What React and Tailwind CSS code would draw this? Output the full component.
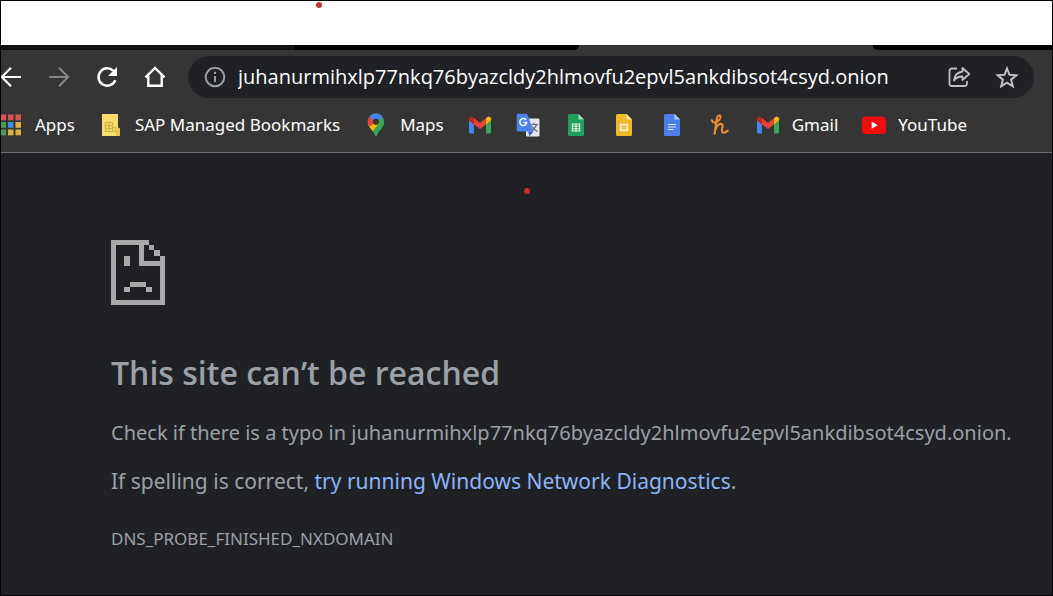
import React from "react";

const HOST = "juhanurmihxlp77nkq76byazcldy2hlmovfu2epvl5ankdibsot4csyd.onion";

function AppsIcon() {
  const colors = [
    "#d9534f", "#d9534f", "#d9534f",
    "#3f9d5b", "#3b8beb", "#e0b13a",
    "#3f9d5b", "#e0b13a", "#e0b13a",
  ];
  return (
    <svg className="size-6 shrink-0" viewBox="0 0 24 24">
      {colors.map((color, i) => (
        <rect
          key={i}
          x={1.5 + (i % 3) * 7.5}
          y={1.5 + Math.floor(i / 3) * 7.5}
          width="5.5"
          height="5.8"
          fill={color}
        />
      ))}
    </svg>
  );
}

function FolderIcon() {
  return (
    <svg className="size-6 shrink-0" viewBox="0 0 24 24">
      <path d="M3 1h16v14l2 1v7H3z" fill="#f7dc6f" />
      <path d="M18.5 14l2.5 1.5V23H17v-6z" fill="#e8c24a" />
      <path
        d="M6.5 9.5h7v9h-7zM6.5 12.5h7M6.5 15.5h7M10 9.5v9M13.5 14.5h3v4h-3"
        fill="none"
        stroke="#d9b23c"
        strokeWidth="1.2"
      />
    </svg>
  );
}

function MapsIcon() {
  return (
    <svg className="size-6 shrink-0" viewBox="0 0 24 24">
      <defs>
        <clipPath id="pin">
          <path d="M12 .5a8.2 8.2 0 0 0-8.2 8.2c0 3 1.3 5 3.2 7.3 2 2.4 3.3 4 4 6.6.3 1.2 1.7 1.2 2 0 .7-2.6 2-4.2 4-6.6 1.9-2.3 3.2-4.3 3.2-7.3A8.2 8.2 0 0 0 12 .5z" />
        </clipPath>
      </defs>
      <g clipPath="url(#pin)">
        <rect width="24" height="24" fill="#34a853" />
        <path d="M0 0h6l6 9-6 6-6-3z" fill="#ea4335" />
        <path d="M3 13.5l9-9.500 3 6.500-8 9.500-5-3z" fill="#fbbc04" />
        <path d="M0 0h6l6 8.700-6.500 5L0 13z" fill="#ea4335" />
        <path d="M5 3l2-3h10l2 3.500-7 7z" fill="#4285f4" />
      </g>
      <circle cx="12" cy="8.7" r="3.1" fill="#353535" />
    </svg>
  );
}

function GmailIcon() {
  return (
    <svg className="size-6 shrink-0" viewBox="0 0 24 24">
      <path d="M1 7.5l5 3.8v9.2H2.5A1.5 1.5 0 0 1 1 19z" fill="#4285f4" />
      <path d="M23 7.5l-5 3.8v9.2h3.5A1.5 1.5 0 0 0 23 19z" fill="#34a853" />
      <path d="M18 5.5v5.9l5-3.8V6.2c0-2.3-2.4-3.3-4-2z" fill="#fbbc04" />
      <path d="M6 11.4V5.2l6 4.6 6-4.6v6.2L12 16z" fill="#ea4335" />
      <path d="M1 6.2v1.4l5 3.8V5.2l-1-.8C3.2 3 1 4.2 1 6.2z" fill="#c5221f" />
    </svg>
  );
}

function TranslateIcon() {
  return (
    <svg className="size-6 shrink-0" viewBox="0 0 24 24">
      <rect x="10" y="5.5" width="13.5" height="18" rx="1.3" fill="#e3e6ea" />
      <path d="M12 18.5h5.5l-4 5z" fill="#3367d6" />
      <path
        d="M14.5 11.5H22M18 9.8v1.7M20.5 11.500c-.8 3-2.8 5-5.500 6.800M16.200 13.200c1 2.200 2.800 4 5 5.200"
        fill="none"
        stroke="#667078"
        strokeWidth="1.2"
      />
      <path d="M2 .7h9.2l6.300 17.800H2A1.3 1.3 0 0 1 .7 17.2V2A1.3 1.3 0 0 1 2 .7z" fill="#4a83ec" />
      <path
        d="M10 6.8a3.5 3.5 0 1 0 .8 2.700H7.5"
        fill="none"
        stroke="#fff"
        strokeWidth="1.4"
      />
    </svg>
  );
}

function FileIcon({ color, fold, children }) {
  return (
    <svg className="size-6 shrink-0" viewBox="0 0 24 24">
      <path
        d="M5.5 1h9L20 6.5v15a1.5 1.5 0 0 1-1.5 1.5h-13A1.5 1.5 0 0 1 4 21.5v-19A1.5 1.5 0 0 1 5.5 1z"
        fill={color}
      />
      <path d="M14.5 1L20 6.5h-5.5z" fill={fold} />
      {children}
    </svg>
  );
}

function SheetsIcon() {
  return (
    <FileIcon color="#1fa15d" fold="#a5dcbf">
      <path
        d="M8.3 11h7.4v7H8.3zM8.3 13.3h7.4M8.3 15.7h7.4M12 11v7"
        fill="none"
        stroke="#e6f4ea"
        strokeWidth="1.1"
      />
    </FileIcon>
  );
}

function SlidesIcon() {
  return (
    <FileIcon color="#efb928" fold="#fae3a0">
      <path d="M8.5 11.5h7v6h-7z" fill="#f3c94f" stroke="#fdf3d5" strokeWidth="1.5" />
    </FileIcon>
  );
}

function DocsIcon() {
  return (
    <FileIcon color="#4a80ee" fold="#b3cdfb">
      <path d="M8 11.5h8M8 14h8M8 16.5h5.5" stroke="#d7e3fc" strokeWidth="1.2" />
    </FileIcon>
  );
}

function HoneyIcon() {
  return (
    <svg className="size-6 shrink-0" viewBox="0 0 24 24">
      <path
        d="M3.8 7.2c.6 2.6 3.400 2.600 5.700 1 2.300-1.600 3.600-4 2.800-5.300-.9-1.300-2.900-.2-3.500 2.600L6.600 20.800M7.600 16.500c1-3.300 3.200-5.600 5.200-5.600 2.300 0 2 2.300 1.400 4.500-.8 3 0 4.600 2 4.300 1.400-.2 2.500-.9 3.400-2"
        fill="none"
        stroke="#e6892f"
        strokeWidth="2.2"
        strokeLinecap="round"
        strokeLinejoin="round"
      />
    </svg>
  );
}

function YouTubeIcon() {
  return (
    <svg className="size-6 shrink-0" viewBox="0 0 24 24">
      <rect x="0" y="3.5" width="24" height="17.5" rx="4" fill="#f40b0b" />
      <path d="M9.7 8.6v7.2l6-3.6z" fill="#fff" />
    </svg>
  );
}

function SadPageIcon() {
  return (
    <svg
      className="h-[65px] w-[54px]"
      viewBox="0 0 54 65"
      fill="#a7a9ab"
      shapeRendering="crispEdges"
    >
      <path d="M0 0h38v5H0zM0 0h5v65H0zM0 60h54v5H0zM49 16h5v49h-5z" />
      <path d="M28 0h5v26h-5zM28 21h26v5H28zM38 5h5v5h-5zM43 10h6v6h-6z" />
      <path d="M13 16h6v10h-6zM19 42h16v5H19zM13 47h6v5h-6zM35 47h6v5h-6z" />
    </svg>
  );
}

const bookmarks = [
  { title: "Apps", icon: AppsIcon, showTitle: true },
  { title: "SAP Managed Bookmarks", icon: FolderIcon, showTitle: true },
  { title: "Maps", icon: MapsIcon, showTitle: true },
  { title: "Inbox", icon: GmailIcon },
  { title: "Translate", icon: TranslateIcon },
  { title: "Sheets", icon: SheetsIcon },
  { title: "Slides", icon: SlidesIcon },
  { title: "Docs", icon: DocsIcon },
  { title: "Honey", icon: HoneyIcon },
  { title: "Gmail", icon: GmailIcon, showTitle: true },
  { title: "YouTube", icon: YouTubeIcon, showTitle: true },
];

function TabStrip() {
  return (
    <div className="flex h-[5px] bg-[#353535]">
      <div className="w-[28%] bg-[#111111]" />
      <div className="flex-1 rounded-br-[5px] bg-black" />
      <div className="w-[28%]" />
      <div className="w-[17%] rounded-bl-[5px] bg-black" />
    </div>
  );
}

function Toolbar() {
  return (
    <div className="flex items-center gap-[21px] pt-1.5 pr-[18px]">
      <div className="-ml-0.5 flex gap-6">
        <button type="button" aria-label="Back">
          <svg className="size-6" viewBox="0 0 24 24" fill="none" stroke="#fff" strokeWidth="2.2">
            <path d="M22 12H3M12 2.8L2.8 12l9.2 9.2" />
          </svg>
        </button>
        <button type="button" aria-label="Forward">
          <svg className="size-6" viewBox="0 0 24 24" fill="none" stroke="#868686" strokeWidth="2">
            <path d="M2 12h19M12 2.8l9.2 9.2-9.2 9.2" />
          </svg>
        </button>
        <button type="button" aria-label="Reload">
          <svg className="size-6" viewBox="0 0 24 24">
            <path d="M20.3 15.2A8.7 8.7 0 1 1 18.5 6" fill="none" stroke="#fff" strokeWidth="2.4" />
            <path d="M22 2v9h-9z" fill="#fff" />
          </svg>
        </button>
        <button type="button" aria-label="Home">
          <svg className="size-6" viewBox="0 0 24 24" fill="none" stroke="#fff" strokeWidth="2.4">
            <path d="M2.5 12.3L12 3l9.5 9.3M5.3 10.5v10.3h13.4V10.5" />
          </svg>
        </button>
      </div>
      <div className="flex h-[42px] min-w-0 flex-1 items-center rounded-full bg-[#202124] pr-[15px] pl-4">
        <svg className="size-[22px] shrink-0" viewBox="0 0 22 22" fill="none" stroke="#9aa0a6" strokeWidth="2">
          <circle cx="11" cy="11" r="9.3" />
          <path d="M11 10v6M11 5.8V8" />
        </svg>
        <input
          type="text"
          aria-label="Address"
          defaultValue={HOST}
          className="ml-3 min-w-0 flex-1 bg-transparent font-['Open_Sans',sans-serif] text-[20px] leading-7 text-white outline-none"
        />
        <div className="flex gap-6">
          <button type="button" aria-label="Share">
            <svg className="size-6" viewBox="0 0 24 24" fill="none" stroke="#bdc1c6" strokeWidth="1.8">
              <path d="M10 3.5H5A2.5 2.5 0 0 0 2.5 6v12.5A2.5 2.5 0 0 0 5 21h12.5a2.5 2.5 0 0 0 2.5-2.5V16" />
              <path d="M15.5 3l6.8 6-6.8 6v-3.5c-4 0-6.5 1-8.5 4 .5-5 3.5-8.3 8.5-9z" strokeLinejoin="round" />
            </svg>
          </button>
          <button type="button" aria-label="Bookmark this page">
            <svg className="size-6" viewBox="0 0 24 24" fill="none" stroke="#bdc1c6" strokeWidth="2">
              <path d="M12 3.5l2.5 6.3 6.8.5-5.2 4.4 1.7 6.6-5.8-3.6-5.8 3.6 1.7-6.6-5.2-4.4 6.8-.5z" />
            </svg>
          </button>
        </div>
      </div>
    </div>
  );
}

function BookmarksBar() {
  return (
    <nav className="-ml-0.5 flex h-[54px] items-center gap-6 whitespace-nowrap">
      {bookmarks.map(({ title, icon: Icon, showTitle }, i) => (
        <a
          key={i}
          href="#"
          aria-label={title}
          className="flex items-center gap-3 text-[17px] leading-6 text-white"
        >
          <Icon />
          {showTitle && <span>{title}</span>}
        </a>
      ))}
    </nav>
  );
}

export default function App() {
  return (
    <div className="relative flex min-h-screen flex-col overflow-hidden border border-black bg-[#202124] font-['Noto_Sans',sans-serif]">
      <div className="h-11 bg-white" />
      <header className="border-b border-[#6a6b6d] bg-[#353535]">
        <TabStrip />
        <Toolbar />
        <BookmarksBar />
      </header>
      <main className="flex-1 pt-[87px] pl-[110px] text-[#9aa0a6]">
        <SadPageIcon />
        <h1 className="mt-11 font-['Open_Sans',sans-serif] text-[32px] leading-12 font-semibold">
          This site can’t be reached
        </h1>
        <p className="mt-5 text-[20px] leading-8">
          Check if there is a typo in {HOST}.
        </p>
        <p className="mt-4 text-[21px] leading-8">
          If spelling is correct,{" "}
          <a href="#" className="text-[#8ab4f8]">
            try running Windows Network Diagnostics
          </a>
          .
        </p>
        <p className="mt-7 text-[17px] leading-7">DNS_PROBE_FINISHED_NXDOMAIN</p>
      </main>
      <span className="absolute top-px left-[30%] size-1.5 rounded-full bg-[#c0343c]" />
      <span className="absolute top-[187px] left-[49.8%] size-1.5 rounded-full bg-[#c9302c]" />
    </div>
  );
}
